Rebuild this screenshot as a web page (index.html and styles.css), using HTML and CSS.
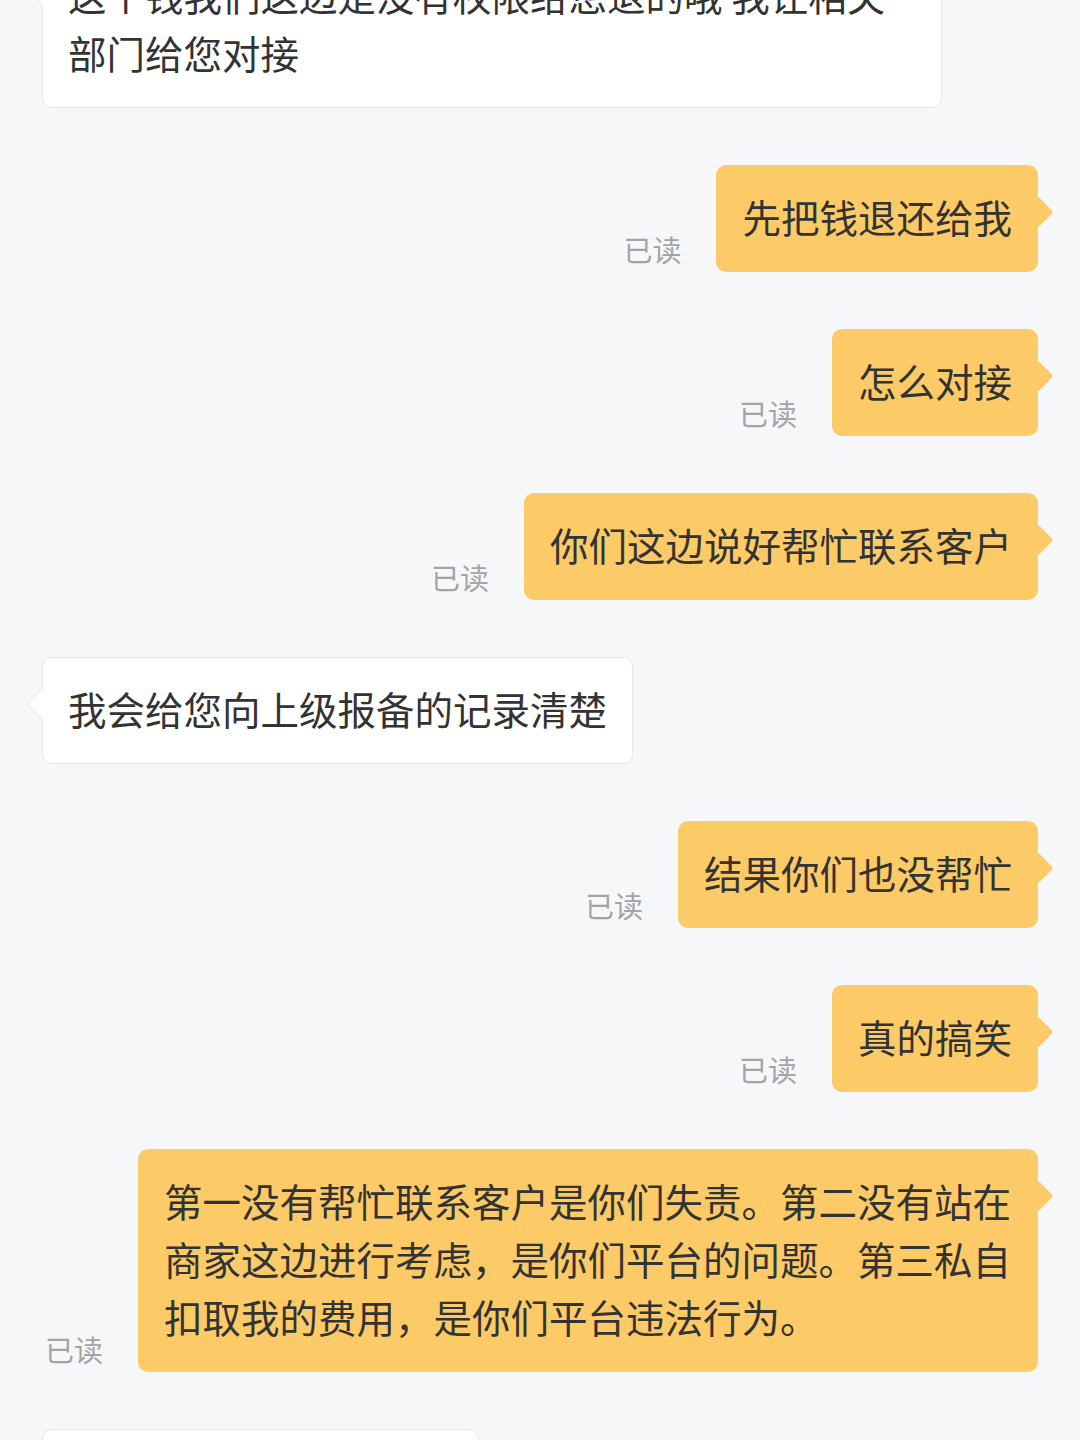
FILE: index.html
```html
<!DOCTYPE html>
<html lang="zh-CN">
<head>
<meta charset="utf-8">
<title>聊天记录</title>
<link rel="stylesheet" href="styles.css">
</head>
<body>
<div class="chat">
  <div class="row left first">
    <div class="bubble in">这个钱我们这边是没有权限给您退的哦 我让相关部门给您对接</div>
  </div>
  <div class="row right">
    <span class="read">已读</span>
    <div class="bubble out">先把钱退还给我</div>
  </div>
  <div class="row right">
    <span class="read">已读</span>
    <div class="bubble out">怎么对接</div>
  </div>
  <div class="row right">
    <span class="read">已读</span>
    <div class="bubble out">你们这边说好帮忙联系客户</div>
  </div>
  <div class="row left">
    <div class="bubble in">我会给您向上级报备的记录清楚</div>
  </div>
  <div class="row right">
    <span class="read">已读</span>
    <div class="bubble out">结果你们也没帮忙</div>
  </div>
  <div class="row right">
    <span class="read">已读</span>
    <div class="bubble out">真的搞笑</div>
  </div>
  <div class="row right">
    <span class="read">已读</span>
    <div class="bubble out">第一没有帮忙联系客户是你们失责。第二没有站在商家这边进行考虑，是你们平台的问题。第三私自扣取我的费用，是你们平台违法行为。</div>
  </div>
  <div class="row left">
    <div class="bubble in">非常抱歉给您带来不便</div>
  </div>
</div>
</body>
</html>
```

FILE: styles.css
```css
html, body {
  margin: 0;
  padding: 0;
  background: #f6f7f9;
}

body {
  width: 1080px;
  height: 1440px;
  overflow: hidden;
  font-family: "Noto Sans CJK SC", "Noto Sans", sans-serif;
  color: #333333;
}

.chat {
  display: flex;
  flex-direction: column;
  gap: 57px;
  padding: 0 42px;
}

.row {
  display: flex;
  align-items: flex-end;
  gap: 35px;
}

.row.first {
  margin-top: -57px;
}

.row.right {
  justify-content: flex-end;
}

.row.left {
  justify-content: flex-start;
}

.bubble {
  position: relative;
  box-sizing: border-box;
  max-width: 900px;
  padding: 22px 26px 27px;
  font-size: 38.5px;
  line-height: 58px;
  border-radius: 10px;
}

.bubble.out {
  background: #fcca66;
  color: #333333;
}

.bubble.out::after {
  content: "";
  position: absolute;
  right: -11px;
  top: 36px;
  width: 22px;
  height: 22px;
  background: #fcca66;
  border-radius: 3px;
  transform: rotate(45deg);
}

.bubble.in {
  background: #ffffff;
  border: 1px solid #e6e7ea;
  padding: 21px 25px 26px;
}

.bubble.in::before {
  content: "";
  position: absolute;
  left: -12px;
  top: 35px;
  width: 22px;
  height: 22px;
  box-sizing: border-box;
  background: #ffffff;
  border-left: 1px solid #e6e7ea;
  border-bottom: 1px solid #e6e7ea;
  border-radius: 0 0 0 3px;
  transform: rotate(45deg);
}

.read {
  font-size: 29px;
  line-height: 1;
  color: #a4a4a6;
  margin-bottom: 8px;
  white-space: nowrap;
}
```
